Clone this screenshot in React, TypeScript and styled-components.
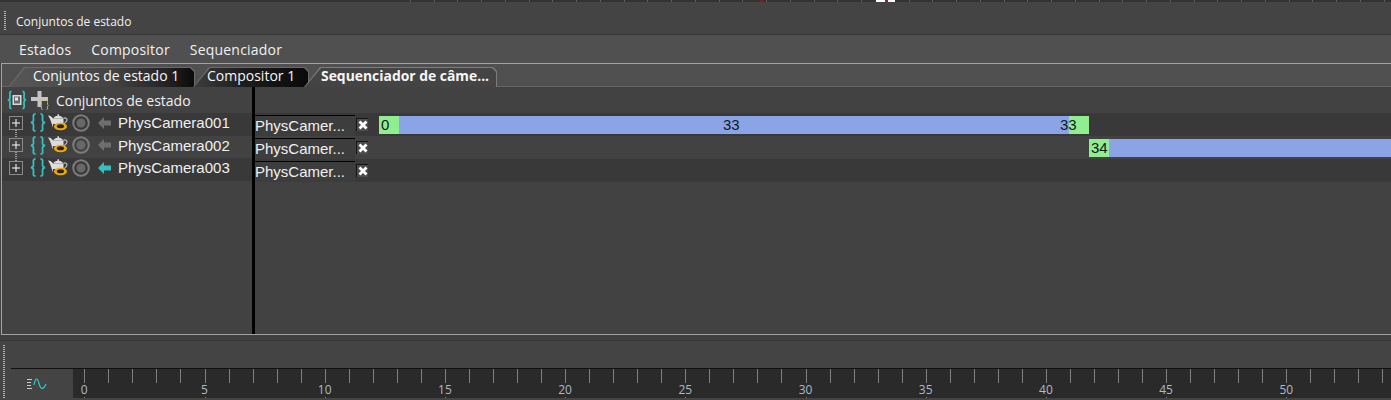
import React from 'react';
import styled, {createGlobalStyle} from 'styled-components';

const FONT = '"Open Sans", "Noto Sans", Arial, sans-serif';
const LIST_FONT = '"Liberation Sans", Arial, sans-serif';
const FRAME = 24.04;

const GlobalStyle = createGlobalStyle`
html, body {
  margin: 0;
  height: 400px;
  overflow: hidden;
  background: #444444;
}
* { box-sizing: border-box; }
`;

const Page = styled.div`
width: 1391px;
height: 400px;
display: flex;
flex-direction: column;
overflow: hidden;
font-family: ${FONT};
color: #f0f0f0;
`;

const TopStrip = styled.div`
position: relative;
height: 2px;
flex: none;
padding-left: 410px;
background: repeating-linear-gradient(90deg, #5c5c5c 0 1px, transparent 1px 23.75px) content-box content-box, #333333;
`;

const TopMarker = styled.div<{$left: number; $width: number; $color: string}>`
position: absolute;
top: 0;
left: ${p => p.$left}px;
width: ${p => p.$width}px;
height: 2px;
background: ${p => p.$color};
`;

const TitleBar = styled.div`
height: 33px;
flex: none;
display: flex;
align-items: center;
padding: 6px 0 0 4px;
background: #444444;
border-bottom: 1px solid #373737;
font-size: 12px;
`;

const Grip = styled.div<{$height: number; $gap: number}>`
width: 2px;
height: ${p => p.$height}px;
margin-right: ${p => p.$gap}px;
flex: none;
background: repeating-linear-gradient(180deg, #b5b5b5 0 1px, transparent 1px 2px);
`;

const MenuBar = styled.div`
height: 28px;
flex: none;
display: flex;
align-items: center;
gap: 20px;
padding-left: 19px;
background: #505050;
font-size: 14px;
letter-spacing: 0.2px;
`;

const Panel = styled.div`
height: 272px;
flex: none;
margin-left: 1px;
display: flex;
flex-direction: column;
border: solid #a3a3a3;
border-width: 1px 0 1px 1px;
background: #424242;
`;

const TabStrip = styled.div`
height: 23px;
flex: none;
display: flex;
padding: 3px 0 0 6px;
background: #505050;
border-bottom: 1px solid #666666;
`;

const TAB_SHAPE = 'polygon(0 100%, 16px 0, calc(100% - 4px) 0, 100% 4px, 100% 100%)';

const Tab = styled.div<{$active?: boolean; $width: number; $overlap: number}>`
position: relative;
z-index: ${p => (p.$active ? 1 : 0)};
width: ${p => p.$width}px;
height: 20px;
flex: none;
margin-left: ${p => -p.$overlap}px;
padding: 1px 1px 0 1px;
background: ${p => (p.$active ? '#7c7c7c' : '#6a6a6a')};
clip-path: ${TAB_SHAPE};
`;

const TabFace = styled.div<{$active?: boolean; $inset: number; $fade: string}>`
height: 100%;
display: flex;
align-items: center;
padding: 0 0 4px ${p => p.$inset}px;
font-size: ${p => (p.$active ? 13.9 : 14)}px;
font-weight: ${p => (p.$active ? 700 : 400)};
color: #f6f6f6;
white-space: nowrap;
background: ${p => (p.$active ? '#444444' : p.$fade)};
clip-path: ${TAB_SHAPE};
`;

const Body = styled.div`
flex: 1;
display: flex;
min-height: 0;
`;

const Tree = styled.div`
width: 250px;
flex: none;
padding-top: 3px;
`;

const Divider = styled.div`
width: 3px;
flex: none;
background: #000000;
`;

const Sequence = styled.div`
flex: 1;
min-width: 0;
padding-top: 26px;
font-family: ${LIST_FONT};
font-size: 15px;
`;

const TreeHeader = styled.div`
height: 23px;
display: flex;
align-items: center;
padding: 0 0 3px 5px;
font-size: 14px;
`;

const HeaderLabel = styled.span`
margin-left: 6px;
`;

const TreeRow = styled.div<{$dark: boolean}>`
height: 22.5px;
display: flex;
align-items: center;
padding: 0 0 3px 7px;
font-family: ${LIST_FONT};
font-size: 15px;
background: ${p => (p.$dark ? '#393939' : '#424242')};
`;

const Slot = styled.span<{$gap: number}>`
display: flex;
flex: none;
margin-left: ${p => p.$gap}px;
`;

const SeqRow = styled.div<{$dark: boolean}>`
height: 23px;
display: flex;
align-items: center;
background: ${p => (p.$dark ? '#393939' : '#424242')};
`;

const CameraField = styled.div`
width: 100px;
height: 21px;
margin-top: 2px;
padding-bottom: 2px;
flex: none;
display: flex;
align-items: center;
border-top: 1px solid #000000;
background: #3d3d3d;
white-space: nowrap;
overflow: hidden;
`;

const RemoveButton = styled.div`
width: 12px;
height: 13px;
margin-left: 1px;
flex: none;
display: flex;
align-items: center;
justify-content: center;
border: solid #141414;
border-width: 1px 0 0 1px;
background: #4c4c4c;
`;

const BarTrack = styled.div<{$start: number}>`
position: relative;
height: 18px;
margin-left: ${p => p.$start}px;
flex: 1;
display: flex;
min-width: 0;
color: #101a20;
`;

const BarCap = styled.div`
width: 20px;
flex: none;
padding-left: 2px;
background: #90ee90;
line-height: 18px;
`;

const BarFill = styled.div<{$width?: number}>`
background: #8aa4e6;
${p => (p.$width ? `width: ${p.$width}px; flex: none;` : 'flex: 1;')}
`;

const BarLabel = styled.span<{$left: number}>`
position: absolute;
top: 0;
left: ${p => p.$left}px;
line-height: 18px;
`;

const Gutter = styled.div`
height: 6px;
flex: none;
background: #404040;
border-bottom: 1px solid #353535;
`;

const SlideBar = styled.div`
flex: 1;
display: flex;
align-items: flex-end;
padding: 0 0 2px 3px;
background: #444444;
`;

const Timeline = styled.div`
flex: 1;
height: 32px;
margin-bottom: -2px;
display: flex;
border-top: 1px solid #111111;
`;

const CurveButton = styled.div`
width: 62px;
flex: none;
display: flex;
align-items: center;
justify-content: center;
padding-right: 11px;
`;

const Ruler = styled.div`
position: relative;
flex: 1;
background: #2a2a2a;
margin-bottom: 2px;
overflow: hidden;
`;

const Tick = styled.div<{$major: boolean}>`
position: absolute;
top: 0;
width: 1px;
height: ${p => (p.$major ? 29 : 14)}px;
background: #808080;
`;

const TickLabel = styled.span`
position: absolute;
top: 14px;
transform: translateX(-50%);
padding: 0 1px;
font-size: 12px;
line-height: 14px;
color: #a8bccb;
background: #2a2a2a;
`;

const Braces = () => (
  <svg width="16" height="19" viewBox="0 0 16 19" fill="none" stroke="#35c0c0" strokeWidth="1.8">
    <path d="M5.500 1C2.500 1 3.500 3.500 3.500 6S3.500 9 1 9.500C3.500 10 3.500 11 3.500 13.500S2.500 18 5.500 18" />
    <path d="M10.500 1C13.500 1 12.500 3.500 12.500 6S12.500 9 15 9.500C12.500 10 12.500 11 12.500 13.500S13.500 18 10.500 18" />
  </svg>
);

const StateSetIcon = () => (
  <svg width="20" height="20" viewBox="0 0 20 20" fill="none">
    <path d="M4.500 1.500C2 1.500 3 4 3 6.500S3 9.500 1 10C3 10.500 3 11 3 13.500S2 18.500 4.500 18.500" stroke="#35c0c0" strokeWidth="1.800" />
    <path d="M15.500 1.500C18 1.500 17 4 17 6.500S17 9.500 19 10C17 10.500 17 11 17 13.500S18 18.500 15.500 18.500" stroke="#35c0c0" strokeWidth="1.800" />
    <rect x="5.500" y="5" width="9" height="10" fill="#d8d8d8" />
    <rect x="7" y="6.500" width="6" height="7" fill="#6a6a6a" />
    <rect x="8" y="7.500" width="3" height="3" fill="#e8e8e8" />
  </svg>
);

const AddStateIcon = () => (
  <svg width="19" height="20" viewBox="0 0 19 20" fill="none">
    <path d="M6.500 1h4v6H17v4h-6.500v6h-4v-6H0V7h6.500z" fill="#c4c4c4" />
    <path d="M11.500 10.500c-1.500 0-1 1.500-1 3.500 0 1-.4 1.300-1 1.500.6.200 1 .5 1 1.500 0 1.500-.5 2.500 1 2.500" stroke="#f2a51e" strokeWidth="1" />
    <path d="M15.500 10.500c1.500 0 1 1.500 1 3.500 0 1 .4 1.300 1 1.500-.6.200-1 .5-1 1.500 0 1.500.5 2.500-1 2.500" stroke="#f2a51e" strokeWidth="1" />
  </svg>
);

const ExpandBox = ({linked}: {linked: boolean}) => (
  <svg width="14" height="14" viewBox="0 0 14 14" fill="none" overflow="visible">
    <rect x="0.500" y="0.500" width="13" height="13" stroke="#8a8a8a" />
    <path d="M3 7h8M7 3v8" stroke="#ffffff" />
    {linked && <path d="M7 14v9" stroke="#ffffff" strokeDasharray="1 1" />}
  </svg>
);

const TeapotEye = () => (
  <svg width="20" height="20" viewBox="0 0 20 20" fill="none">
    <path d="M0 2.500c2.500 0 3.500 1.200 5 3C6 4 8 3 9.500 2.800V1.300h1.500v1.500c2 .3 3.500 1.300 4.500 2.700H5v9C3.500 10.500 2.500 6 0 2.500z" fill="#dcdcdc" />
    <path d="M5 5.500h10.500V11H5z" fill="#dcdcdc" />
    <path d="M15.500 5.500c1-1 3.500-.6 3.500 1.200 0 2-1.800 3-3.500 4.500" stroke="#b8b8b8" strokeWidth="1.200" />
    <ellipse cx="12.500" cy="13.500" rx="6.500" ry="3.800" fill="#f0a80f" />
    <ellipse cx="12.500" cy="13.200" rx="3.600" ry="2" fill="#2b2418" />
  </svg>
);

const TargetDot = () => (
  <svg width="18" height="18" viewBox="0 0 18 18" fill="none">
    <circle cx="9" cy="9" r="7.800" stroke="#7c7c7c" strokeWidth="2" />
    <circle cx="9" cy="9" r="4.500" fill="#686868" />
  </svg>
);

const ArrowLeft = ({active}: {active: boolean}) => (
  <svg width="13" height="12" viewBox="0 0 13 12">
    <path d="M0 6L6 0V3.500H13V8.500H6V12z" fill={active ? '#35c0c0' : '#6e6e6e'} />
  </svg>
);

const CrossIcon = () => (
  <svg width="10" height="10" viewBox="0 0 10 10" fill="none">
    <path d="M1.500 1.500l7 7M8.500 1.500l-7 7" stroke="#ffffff" strokeWidth="2.800" />
  </svg>
);

const CurveIcon = () => (
  <svg width="20" height="13" viewBox="0 0 20 13" fill="none">
    <path d="M0 1.500h5M0 4.500h4M0 7.500h4M0 10.500h5" stroke="#c8c8c8" />
    <path d="M7 7c1.500-8 3.500-7 5-1.500S16 13 19 6" stroke="#35c0c0" strokeWidth="1.300" />
  </svg>
);

const cameras = ['PhysCamera001', 'PhysCamera002', 'PhysCamera003'];
const tabs = [
  {label: 'Conjuntos de estado 1', width: 187, overlap: 0, inset: 24, fade: 'linear-gradient(90deg, #575757 0%, #444444 55%, #232323 85%, #0a0a0a 100%)'},
  {label: 'Compositor 1', width: 116, overlap: 2, inset: 13, fade: 'linear-gradient(90deg, #3c3c3c 0%, #1c1c1c 45%, #0a0a0a 100%)'},
  {label: 'Sequenciador de câme...', width: 193, overlap: 5, inset: 16, active: true, fade: ''},
];

export default function App() {
  const ticks = Array.from({length: 55}, (_, i) => i);
  return (
    <Page>
      <GlobalStyle />
      <TopStrip>
        <TopMarker $left={760} $width={3} $color="#7a2020" />
        <TopMarker $left={876} $width={19} $color="#ffffff" />
        <TopMarker $left={885} $width={3} $color="#a02020" />
      </TopStrip>
      <TitleBar><Grip $height={20} $gap={10} />Conjuntos de estado</TitleBar>
      <MenuBar><span>Estados</span><span>Compositor</span><span>Sequenciador</span></MenuBar>
      <Panel>
        <TabStrip>
          {tabs.map(t => (
            <Tab key={t.label} $active={t.active} $width={t.width} $overlap={t.overlap}>
              <TabFace $active={t.active} $inset={t.inset} $fade={t.fade}>{t.label}</TabFace>
            </Tab>
          ))}
        </TabStrip>
        <Body>
          <Tree>
            <TreeHeader>
              <StateSetIcon />
              <Slot $gap={4}><AddStateIcon /></Slot>
              <HeaderLabel>Conjuntos de estado</HeaderLabel>
            </TreeHeader>
            {cameras.map((name, i) => (
              <TreeRow key={name} $dark={i % 2 === 0}>
                <ExpandBox linked={i < 2} />
                <Slot $gap={7}><Braces /></Slot>
                <Slot $gap={2}><TeapotEye /></Slot>
                <Slot $gap={4}><TargetDot /></Slot>
                <Slot $gap={8}><ArrowLeft active={i === 2} /></Slot>
                <Slot $gap={7}>{name}</Slot>
              </TreeRow>
            ))}
          </Tree>
          <Divider />
          <Sequence>
            {cameras.map((name, i) => (
              <SeqRow key={name} $dark={i % 2 === 0}>
                <CameraField>PhysCamer...</CameraField>
                <RemoveButton><CrossIcon /></RemoveButton>
                {i === 0 && (
                  <BarTrack $start={11}>
                    <BarCap>0</BarCap>
                    <BarFill $width={670} />
                    <BarCap />
                    <BarLabel $left={344}>33</BarLabel>
                    <BarLabel $left={681}>33</BarLabel>
                  </BarTrack>
                )}
                {i === 1 && (
                  <BarTrack $start={721}>
                    <BarCap>34</BarCap>
                    <BarFill />
                  </BarTrack>
                )}
              </SeqRow>
            ))}
          </Sequence>
        </Body>
      </Panel>
      <Gutter />
      <SlideBar>
        <Grip $height={53} $gap={6} />
        <Timeline>
          <CurveButton><CurveIcon /></CurveButton>
          <Ruler>
            {ticks.map(i => <Tick key={i} $major={i % 5 === 0} style={{left: 11.3 + i * FRAME}} />)}
            {ticks.filter(i => i % 5 === 0).map(i => (
              <TickLabel key={i} style={{left: 11.3 + i * FRAME}}>{i}</TickLabel>
            ))}
          </Ruler>
        </Timeline>
      </SlideBar>
    </Page>
  );
}
